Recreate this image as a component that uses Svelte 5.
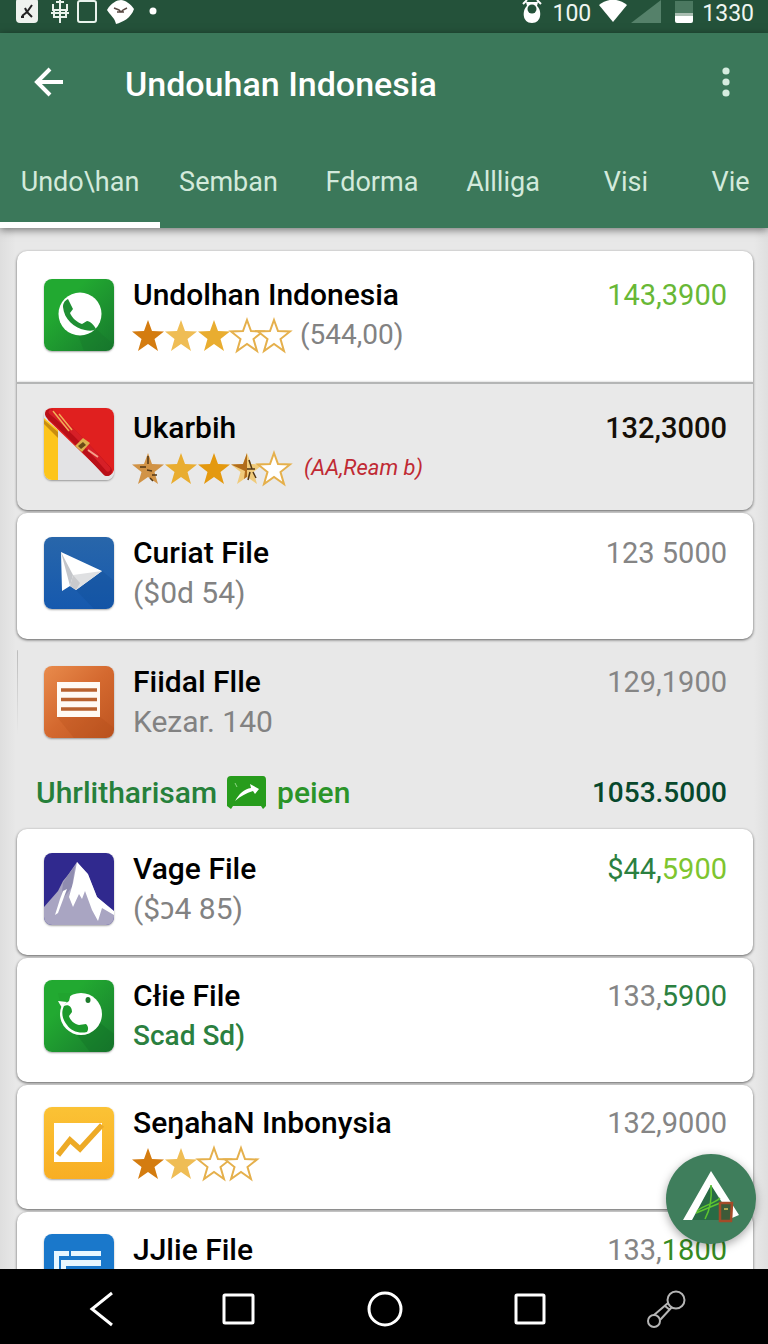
<script>
	const tabs = ['Undo\\han', 'Semban', 'Fdorma', 'Allliga', 'Visi', 'Vie'];
	let active = $state(0);

	// amount is a list of [text, colour class] parts
	const top = [
		{ icon: 'phone', name: 'Undolhan Indonesia', stars: ['dark', 'light', 'mid', 'empty', 'empty'], note: '(544,00)', amount: [['143,3900', 'lime']], kind: 'first' },
		{ icon: 'pen', name: 'Ukarbih', stars: ['bronze', 'mid', 'gold', 'half', 'empty'], note: '(AA,Ream b)', noteClass: 'red', amount: [['132,3000', 'black']], kind: 'second' },
		{ icon: 'plane', name: 'Curiat File', note: '($0d 54)', amount: [['123 5000', 'grey']] },
		{ icon: 'doc', name: 'Fiidal Flle', note: 'Kezar. 140', amount: [['129,1900', 'grey']], kind: 'flat' }
	];

	const bottom = [
		{ icon: 'mountain', name: 'Vage File', note: '($ɔ4 85)', amount: [['$44,', 'green'], ['5900', 'bright']] },
		{ icon: 'call', name: 'Cłie File', note: 'Scad Sd)', noteClass: 'strong', amount: [['133,', 'grey'], ['5900', 'green']], kind: 'compact' },
		{ icon: 'chart', name: 'SeŋahaN Inbonysia', stars: ['dark', 'light', 'empty', 'empty'], amount: [['132,9000', 'grey']], kind: 'compact' },
		{ icon: 'list', name: 'JJlie File', note: '', amount: [['133,', 'grey'], ['1800', 'leaf']], kind: 'compact' }
	];
</script>

{#snippet appIcon(name)}
	<svg class="icon" viewBox="0 0 70 72" aria-hidden="true">
		{#if name === 'phone'}
			<rect width="70" height="72" fill="url(#greenTile)" />
			<path d="M52 50 70 66V72H40L34 56z" fill="#16702a" opacity=".3" />
			<circle cx="36" cy="35" r="21.500" fill="#fff" />
			<path d="M24 20 29 30 26 34C28 39 33 43 38 45L43 42C46 42 50 46 52 50 50 52 45 52 41 51 30 49 20 40 19 28 19 25 20 22 24 20z" fill="#1f8f33" />
		{:else if name === 'pen'}
			<rect width="70" height="72" fill="#e3e3e5" />
			<path d="M0 10 14 22V72H0z" fill="#fdc51b" />
			<path d="M0 12 14 24V30L0 16z" fill="#c98d10" />
			<path d="M0 0H70V62Q68 68 62 68L4 12z" fill="#e0201f" />
			<path d="M6 6C22 19 40 38 63 63" fill="none" stroke="#b90f18" stroke-width="10" stroke-linecap="round" />
			<path d="M7 4C24 17 42 36 64 61" fill="none" stroke="#d61f27" stroke-width="5" stroke-linecap="round" />
			<path d="M9 3 25 23M15 6 28 22" stroke="#f1ae55" stroke-width="1.500" />
			<path d="M44 42 54 49" stroke="#f5a08a" stroke-width="2" />
			<path d="M39 30 46 35 38 44 31 38z" fill="#dcb04d" />
			<path d="M39 34 42 37 37 41 34 38z" fill="#6b4a16" />
		{:else if name === 'plane'}
			<rect width="70" height="72" fill="url(#blueTile)" />
			<path d="M58 34 70 44V72H50L32 53z" fill="#0c4890" opacity=".25" />
			<path d="M17 15 58 34 32 53 26 49 18 54z" fill="#fff" />
			<path d="M29 38 58 34 32 53z" fill="#dfe0e2" />
			<path d="M17 15 29 38 26 49z" fill="#c4c6ca" />
			<path d="M29 38 36 46 32 53 26 49z" fill="#c9cacd" />
		{:else if name === 'doc'}
			<rect width="70" height="72" fill="url(#orangeTile)" />
			<path d="M56 51 70 62V72H30L13 51z" fill="#a84714" opacity=".2" />
			<path d="M13 16H56V51H13z" fill="#fffaf4" />
			<path d="M17 24H53M17 33.500H53M17 43H53" stroke="#b8622f" stroke-width="3.500" />
		{:else if name === 'mountain'}
			<rect width="70" height="72" fill="#30298e" />
			<path d="M0 54 14 38 19 28 24 22 33 9 44 22 53 44 70 59V72H0z" fill="#a9a5c2" />
			<path d="M24 22 31 13 28 34 17 48 19 30z" fill="#8f8caf" />
			<path d="M33 9 44 21 53 44 70 58V62L58 55 54 68 48 57 41 38 38 46 35 41 29 54 25 44 29 30z" fill="#fff" />
			<path d="M19 38 23 36 14 60 11 62 16 46z" fill="#fff" />
		{:else if name === 'call'}
			<rect width="70" height="72" fill="url(#greenTile)" />
			<path d="M56 43 70 54V72H46L33 55z" fill="#126d26" opacity=".35" />
			<circle cx="37" cy="34" r="21" fill="#fff" />
			<path d="M14 13H27L25 21 17 27z" fill="#21a42f" />
			<path d="M14 21 23 22 18 28z" fill="#fff" />
			<path d="M20 26c4-2 8 0 8 6l-3 4c1 4 5 8 10 9l7-1c2 2 3 5 1 8-8 2-16-1-20-7-5-6-6-13-3-19z" fill="#1d9a2c" />
			<ellipse cx="44" cy="20" rx="2.500" ry="3" fill="#1d7a2b" />
		{:else if name === 'chart'}
			<rect width="70" height="72" fill="url(#yellowTile)" />
			<path d="M10 16H58V55H10z" fill="#fff" />
			<path d="M14 48 26 33 36 42 58 18" fill="none" stroke="#edaa26" stroke-width="5.500" />
		{:else}
			<rect width="70" height="72" fill="#1a78cb" />
			<path d="M10 17H25V22H15V50H10zM27 17H57V22H27zM17 26H57V32H22V50H17z" fill="#e8f7ff" />
		{/if}
	</svg>
{/snippet}

{#snippet star(tone)}
	<svg class="star {tone}" viewBox="0 0 32 32" aria-hidden="true">
		<path d="M16 1 20 12 32 12.500 22.500 20 26 32 16 25 6 32 9.500 20 0 12.500 12 12z" />
		{#if tone === 'half'}
			<path class="dark-half" d="M16 1V24.800L13 27 14 19 0 12.500 12 12z" />
			<path class="scratch" d="M18 8 21 17M16 17H24M19 20 17 28M22 20 25 26" />
		{:else if tone === 'bronze'}
			<path class="scratch" d="M8 15H14M15 18 20 19M16 4V12M20 23H25M18 26 21 29" />
		{/if}
	</svg>
{/snippet}

{#snippet row(item)}
	<li class="card {item.kind}">
		{@render appIcon(item.icon)}
		<div class="text">
			<h2>{item.name}</h2>
			<div class="sub">
				{#if item.stars}
					<span class="stars">
						{#each item.stars as tone}{@render star(tone)}{/each}
					</span>
				{/if}
				{#if item.note}<span class="note {item.noteClass}">{item.note}</span>{/if}
			</div>
		</div>
		<div class="amount">
			{#each item.amount as [text, colour]}<span class={colour}>{text}</span>{/each}
		</div>
	</li>
{/snippet}

<svg class="defs" aria-hidden="true">
	<defs>
		<linearGradient id="greenTile" x2="1" y2="1"><stop offset=".3" stop-color="#22a931" /><stop offset="1" stop-color="#17782d" /></linearGradient>
		<linearGradient id="blueTile" x2="0" y2="1"><stop stop-color="#2866aa" /><stop offset="1" stop-color="#1659ae" /></linearGradient>
		<linearGradient id="orangeTile" x2="1" y2="1"><stop stop-color="#e98b4c" /><stop offset=".5" stop-color="#d4692f" /><stop offset="1" stop-color="#bd5420" /></linearGradient>
		<linearGradient id="yellowTile" x2="0" y2="1"><stop stop-color="#fbc235" /><stop offset="1" stop-color="#f8ae23" /></linearGradient>
	</defs>
</svg>

<div class="app">
	<div class="status">
		<svg width="22" height="24" viewBox="0 0 22 24"><rect y="-2" width="22" height="25" rx="4" fill="#eef2ee" /><path d="M6 16 11 12 16 5M11 12 9 8M11 12 16 17M5 17H8" fill="none" stroke="#222" stroke-width="2" /></svg>
		<svg class="grid-mark" width="18" height="24" viewBox="0 0 18 24"><path d="M5 2H13M2 4V10H16V4M9 0V23M3 10V17H15V10M0 13H18" fill="none" stroke="#e9f3ec" stroke-width="2" /></svg>
		<svg width="20" height="24" viewBox="0 0 20 24"><rect x="1" y="1" width="18" height="21" rx="2" fill="none" stroke="#e9f3ec" stroke-width="2" /></svg>
		<svg class="leaf-mark" width="27" height="24" viewBox="0 0 27 24"><path d="M0 10C4 3 10 0 14 0S24 4 27 9C24 18 16 22 9 24 8 18 3 15 0 10z" fill="#fff" /><path d="M7 8 12 10 14 12 16 10 20 8M10 12H17" fill="none" stroke="#5a4a44" stroke-width="1.500" /></svg>
		<svg class="dot" width="8" height="24" viewBox="0 0 8 24"><circle cx="4" cy="11" r="3.500" fill="#fff" /></svg>
		<svg class="alarm" width="20" height="24" viewBox="0 0 20 24"><path d="M1 4 5 0M19 4 15 0" stroke="#fff" stroke-width="2" /><path d="M4 2H16L15 6C20 10 20 23 10 23S0 10 5 6z" fill="#fff" /><circle cx="10" cy="9" r="4.500" fill="#24523a" /></svg>
		<span class="percent">100</span>
		<svg class="wifi" width="28" height="24" viewBox="0 0 28 24"><path d="M0 5C8-2 20-2 28 5L14 22z" fill="#fff" /></svg>
		<svg width="30" height="24" viewBox="0 0 30 24"><path d="M30 0V23H0z" fill="#55816a" /></svg>
		<svg class="battery" width="18" height="24" viewBox="0 0 18 24"><path d="M0 1H18V13H0z" fill="#4b7860" /><path d="M0 13H18V16H0z" fill="#a9bdb1" /><path d="M0 16H18V21Q18 23 16 23H2Q0 23 0 21z" fill="#fff" /></svg>
		<time>1330</time>
	</div>

	<header>
		<div class="toolbar">
			<button aria-label="Back">
				<svg width="30" height="32" viewBox="0 0 30 32"><path d="M16 3 3 16 16 29M3 16H29" fill="none" stroke="#fff" stroke-width="4" /></svg>
			</button>
			<h1>Undouhan Indonesia</h1>
			<button aria-label="More">
				<svg width="8" height="32" viewBox="0 0 8 32" fill="#d5ecdf"><circle cx="4" cy="5" r="3.600" /><circle cx="4" cy="16" r="3.600" /><circle cx="4" cy="27" r="3.600" /></svg>
			</button>
		</div>
		<div class="tabs" role="tablist">
			{#each tabs as tab, i}
				<button role="tab" aria-selected={active === i} class:active={active === i} onclick={() => active = i}>{tab}</button>
			{/each}
		</div>
	</header>

	<main>
		<ul>
			{#each top as item}{@render row(item)}{/each}
			<li class="section">
				<span class="label">
					<span>Uhrlitharisam</span>
					<svg width="40" height="34" viewBox="0 0 40 34" aria-hidden="true"><path d="M4 0H36Q39 0 39 4V30L36 33 34 30H6L4 33 0 30V4Q0 0 4 0z" fill="#279c1c" /><path d="M8 25C12 18 17 13 24 12L23 8 32 13 28 18 26 15C19 17 14 20 8 25z" fill="#fff" /><path d="M8 7 10 11" stroke="#8fd786" /></svg>
					<span class="fresh">peien</span>
				</span>
				<span class="total">1053.5000</span>
			</li>
			{#each bottom as item}{@render row(item)}{/each}
		</ul>
		<button class="fab" aria-label="Create">
			<svg viewBox="0 0 90 90">
				<path d="M45 30 64 66H26z" fill="#286b45" />
				<path d="M45 17 73 61 66 64 45 31 26 66H17z" fill="#fff" />
				<path d="M45 31C46 44 44 56 39 65M31 57C38 51 48 50 54 44M30 59 54 49" fill="none" stroke="#5dc62f" stroke-width="1.500" />
				<path d="M54 49H66L65 67H54z" fill="#3d5a38" stroke="#a44b28" stroke-width="2.500" />
				<path d="M58 55H62" stroke="#d8c25a" stroke-width="1.500" />
			</svg>
		</button>
	</main>

	<nav>
		<button aria-label="Back"><svg width="38" height="38" viewBox="0 0 38 38"><path d="M29 3 9 19 29 35" /></svg></button>
		<button aria-label="Recent"><svg width="38" height="38" viewBox="0 0 38 38"><rect x="4" y="5" width="29" height="28" rx="1" /></svg></button>
		<button aria-label="Home"><svg width="38" height="38" viewBox="0 0 38 38"><circle cx="19" cy="19" r="16" /></svg></button>
		<button aria-label="Windows"><svg width="38" height="38" viewBox="0 0 38 38"><rect x="5" y="5" width="28" height="28" rx="1" /></svg></button>
		<button aria-label="Link"><svg class="link" width="40" height="40" viewBox="0 0 40 40"><circle cx="30" cy="11" r="8.500" /><circle cx="8" cy="32" r="6" /><path d="M22 14 8 26M26 18 14 31M19 17 24 21" /></svg></button>
	</nav>
</div>

<style>
	:global(body) {
		margin: 0;
		background: #e7e7e7;
	}

	.app {
		display: flex;
		flex-direction: column;
		height: 100vh;
		overflow: hidden;
		font-family: Roboto, 'Noto Sans', sans-serif;
		color: #000;
	}

	.defs {
		position: absolute;
		width: 0;
		height: 0;
	}

	button {
		border: 0;
		padding: 0;
		background: none;
		font: inherit;
		color: inherit;
		cursor: pointer;
	}

	svg {
		display: block;
		flex: none;
	}

	.status {
		display: flex;
		box-sizing: border-box;
		height: 33px;
		padding: 0 14px 0 16px;
		background: #24523a;
		color: #eff6f1;
		font-size: 23px;
		line-height: 27px;
	}

	.grid-mark { margin-left: 13px }
	.grid-mark + svg { margin-left: 8px }
	.leaf-mark { margin-left: 10px }
	.dot { margin-left: 15px }
	.alarm { margin-left: auto }
	.percent { margin-left: 11px }
	.wifi { margin: 0 4px 0 8px }
	.battery { margin: 0 9px 0 14px }

	header {
		position: relative;
		z-index: 1;
		background: #3b785a;
		box-shadow: 0 2px 8px rgba(0,0,0,0.5);
	}

	.toolbar {
		display: flex;
		align-items: center;
		height: 98px;
		padding: 0 38px 0 34px;
	}

	h1 {
		flex: 1;
		margin: 0 0 0 61px;
		padding-top: 4px;
		font-size: 34px;
		font-weight: 500;
		line-height: 40px;
		color: #fff;
	}

	.tabs {
		display: grid;
		grid-template-columns: 160fr 137fr 150fr 112fr 134fr 75fr;
		height: 97px;
	}

	.tabs button {
		padding-top: 10px;
		border-bottom: 6px solid transparent;
		font-size: 27px;
		line-height: 40px;
		color: #d3eadc;
	}

	.tabs .active { border-color: #fff }

	main {
		position: relative;
		flex: 1;
		min-height: 0;
		overflow: hidden;
		background: linear-gradient(90deg, #dedede, #e8e8e8 16px, #e8e8e8 calc(100% - 14px), #dfdfdf);
	}

	ul {
		display: flex;
		flex-direction: column;
		gap: 3px;
		margin: 0;
		padding: 23px 15px 0 17px;
		list-style: none;
	}

	.card {
		display: flex;
		box-sizing: border-box;
		height: 126px;
		padding: 20px 26px 0 27px;
		border-radius: 10px;
		background: #fff;
		box-shadow: 0 1px 3px rgba(0,0,0,0.6);
	}

	.first {
		height: 131px;
		padding-top: 24px;
		border-radius: 10px 10px 0 0;
	}

	.second {
		height: 128px;
		padding-top: 24px;
		margin-top: -3px;
		border-top: 2px solid #b4b5b5;
		border-radius: 0 0 10px 10px;
		background: #e9e9e9;
	}

	.second .icon { margin-top: 0 }

	.flat {
		background: linear-gradient(#bbb, transparent) 0 8px / 1px 84px no-repeat;
		box-shadow: none;
	}

	.compact {
		height: 124px;
		padding-top: 18px;
	}

	.icon {
		width: 70px;
		height: 72px;
		margin-top: 4px;
		border-radius: 8px;
		box-shadow: 0 1px 2px rgba(0,0,0,0.35);
	}

	.text {
		flex: 1;
		margin-left: 19px;
	}

	h2 {
		margin: 0;
		font-size: 30px;
		font-weight: 500;
		line-height: 40px;
	}

	.sub {
		display: flex;
		align-items: center;
		gap: 9px;
		height: 40px;
		font-size: 30px;
		line-height: 40px;
		color: #828282;
	}

	.stars {
		display: flex;
		gap: 1px;
	}

	.stars + .note { font-size: 28px }

	.star {
		width: 32px;
		height: 32px;
		margin-left: -1px;
		margin-right: 1px;
		fill: #e9ad30;
	}

	.star.dark { fill: #d47c10 }
	.star.light { fill: #efbd55 }
	.star.gold { fill: #e4990f }
	.star.bronze { fill: #d19346 }
	.star.half { fill: #f0cb7b }
	.dark-half { fill: #b06c1c }

	.scratch {
		fill: none;
		stroke: #513716;
		stroke-width: 1.5;
	}

	.star.empty {
		overflow: visible;
		fill: #fff;
		stroke: #e5b04c;
		stroke-width: 2;
	}

	.empty + .empty, .half + .empty { margin-left: -7px }

	.amount {
		font-size: 29px;
		line-height: 40px;
		white-space: nowrap;
	}

	.lime { color: #68b836 }
	.black { color: #161008; font-weight: 500 }
	.grey { color: #858585 }
	.green { color: #2b8040 }
	.bright { color: #7ec52f }
	.leaf { color: #358a22 }

	.strong {
		font-size: 28px;
		font-weight: 500;
		color: #2b8040;
	}

	.stars + .red {
		margin-left: 4px;
		font-size: 22px;
		font-style: italic;
		color: #c02a33;
	}

	.section {
		display: flex;
		justify-content: space-between;
		padding: 2px 26px 13px 19px;
		font-size: 30px;
		font-weight: 500;
		line-height: 40px;
	}

	.label {
		display: flex;
		align-items: center;
		gap: 10px;
		color: #26803a;
	}

	.fresh { color: #2b9428 }

	.total {
		font-size: 28px;
		color: #07482c;
	}

	.fab {
		position: absolute;
		right: 12px;
		bottom: 25px;
		width: 90px;
		height: 90px;
		border-radius: 50%;
		background: #3f7e5c;
		box-shadow: 0 3px 10px rgba(0,0,0,0.35);
	}

	nav {
		display: grid;
		grid-template-columns: 136fr 138fr 154fr 136fr 136fr;
		box-sizing: border-box;
		height: 75px;
		padding: 4px 34px 0;
		background: #000;
	}

	nav button {
		display: grid;
		place-items: center;
	}

	nav svg {
		fill: none;
		stroke: #fff;
		stroke-width: 3;
	}

	nav .link {
		stroke: #b5b5b5;
		stroke-width: 2;
	}
</style>
